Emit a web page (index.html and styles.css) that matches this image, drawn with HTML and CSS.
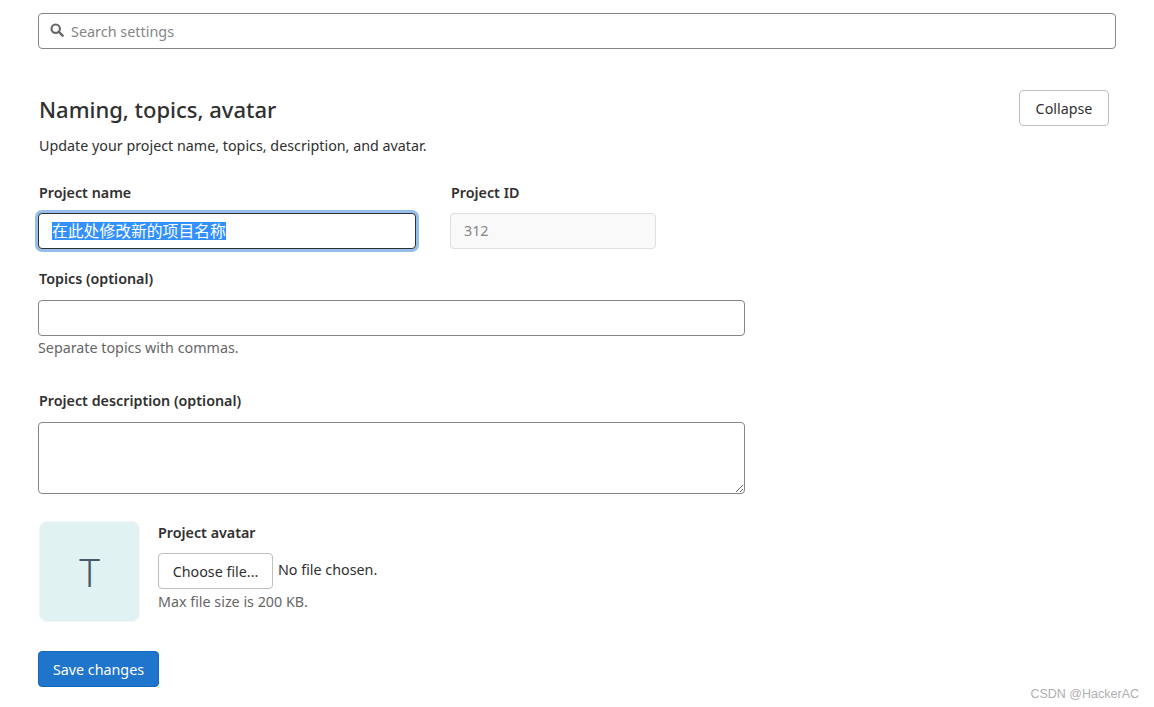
FILE: index.html
```html
<!DOCTYPE html>
<html lang="en">
<head>
<meta charset="utf-8">
<title>Settings</title>
<link rel="stylesheet" href="styles.css">
</head>
<body>
<div class="page">
  <div class="search">
    <svg class="search-icon" viewBox="0 0 16 16" width="14" height="14" aria-hidden="true"><circle cx="6.5" cy="6.5" r="4.8" fill="none" stroke="#666" stroke-width="2.4"/><path d="M10 10l4.4 4.4" stroke="#666" stroke-width="2.8" stroke-linecap="round"/></svg>
    <span class="search-text">Search settings</span>
  </div>
  <section class="section">
    <header class="section-head">
      <div>
        <h2 class="title">Naming, topics, avatar</h2>
        <p class="desc">Update your project name, topics, description, and avatar.</p>
      </div>
      <button class="btn collapse" type="button">Collapse</button>
    </header>
    <div class="row">
      <div class="col-name">
        <label class="label">Project name</label>
        <div class="field focused"><span class="selected">在此处修改新的项目名称</span></div>
      </div>
      <div class="col-id">
        <label class="label">Project ID</label>
        <div class="field disabled">312</div>
      </div>
    </div>
    <div class="group-topics">
      <label class="label">Topics (optional)</label>
      <input class="field wide" type="text">
      <p class="help">Separate topics with commas.</p>
    </div>
    <div class="group-desc">
      <label class="label">Project description (optional)</label>
      <textarea class="field wide area"></textarea>
    </div>
    <div class="avatar-row">
      <div class="avatar">T</div>
      <div class="avatar-body">
        <label class="label">Project avatar</label>
        <div class="file-row">
          <button class="btn choose" type="button">Choose file...</button>
          <span class="file-name">No file chosen.</span>
        </div>
        <p class="help">Max file size is 200 KB.</p>
      </div>
    </div>
    <button class="btn save" type="button">Save changes</button>
  </section>
</div>
<div class="watermark">CSDN @HackerAC</div>
</body>
</html>
```
FILE: styles.css
```css
* { box-sizing: border-box; }
html, body { margin: 0; height: 100%; overflow: hidden; background: #fff; }
body { font-family: "Noto Sans", "Noto Sans CJK SC", sans-serif; font-size: 14px; color: #303030; }
.page { padding: 13px 38px 0; }
.search {
  width: 1078px; height: 36px; border: 1px solid #868686; border-radius: 4px;
  display: flex; align-items: center; padding: 0 11px; gap: 7px;
}
.search-icon { flex: none; margin-top: -2px; }
.search-text { color: #868686; font-size: 14.4px; }
.section { margin-top: 41px; }
.section-head { display: flex; justify-content: space-between; align-items: flex-start; padding-left: 1px; width: 1071px; }
.title { margin: 0; font-size: 22px; line-height: 30px; font-weight: 500; color: #303030; padding-top: 4px; }
.desc { margin: 12px 0 0; font-size: 14.3px; line-height: 20px; }
.btn {
  font-family: inherit; font-size: 14.3px; background: #fff; color: #303030;
  border: 1px solid #bfbfbf; border-radius: 4px; height: 36px; padding: 0; display: block;
}
.collapse { width: 90px; }
.label { display: block; font-size: 14.3px; font-weight: 600; line-height: 20px; padding-left: 1px; color: #303030; }
.row { display: flex; margin-top: 27px; gap: 34px; }
.col-name { width: 378px; }
.col-id { width: 206px; }
.row .label { margin-bottom: 10px; }
.field {
  display: block; height: 36px; border: 1px solid #868686; border-radius: 4px;
  padding: 0 13px; font-family: inherit; font-size: 14.3px; line-height: 34px; background: #fff; color: #303030;
}
.focused {
  border-color: #303030;
  box-shadow: 0 0 0 3px #95bfea;
  font-family: "Noto Sans CJK SC", sans-serif;
}
.selected { background: #3390ff; color: #fff; display: inline-block; line-height: 18px; font-size: 15.8px; }
.disabled { background: #f9f9f9; border-color: #dfdfdf; color: #868686; }
.group-topics { margin-top: 20px; }
.group-topics .label { margin-bottom: 11px; }
.wide { width: 707px; outline: none; }
.help { margin: 2px 0 0; font-size: 14.3px; line-height: 20px; color: #666; }
.group-desc { margin-top: 33px; }
.group-desc .label { margin-bottom: 11px; }
.area { height: 72px; resize: vertical; }
.avatar-row { display: flex; margin-top: 27px; padding-left: 1px; gap: 18px; }
.avatar {
  width: 101px; height: 101px; border-radius: 8px; background: #e0f2f2; border: 1px solid #eef6f6;
  display: flex; align-items: center; justify-content: center; font-size: 39px; font-weight: 300; color: #4b5563;
}
.avatar-body { padding-top: 2px; }
.avatar-body .label { padding-left: 0; margin-bottom: 10px; }
.file-row { display: flex; align-items: flex-start; gap: 5px; }
.choose { width: 115px; }
.file-name { font-size: 14.3px; line-height: 34px; }
.avatar-body .help { margin-top: 3px; }
.save { margin-top: 29px; width: 121px; background: #1f75cb; border-color: #1068bf; color: #fff; }
.watermark {
  position: absolute; right: 15px; bottom: 6px;
  font-family: "Liberation Sans", sans-serif; font-size: 12.5px; color: #b0b0b0;
}
```
